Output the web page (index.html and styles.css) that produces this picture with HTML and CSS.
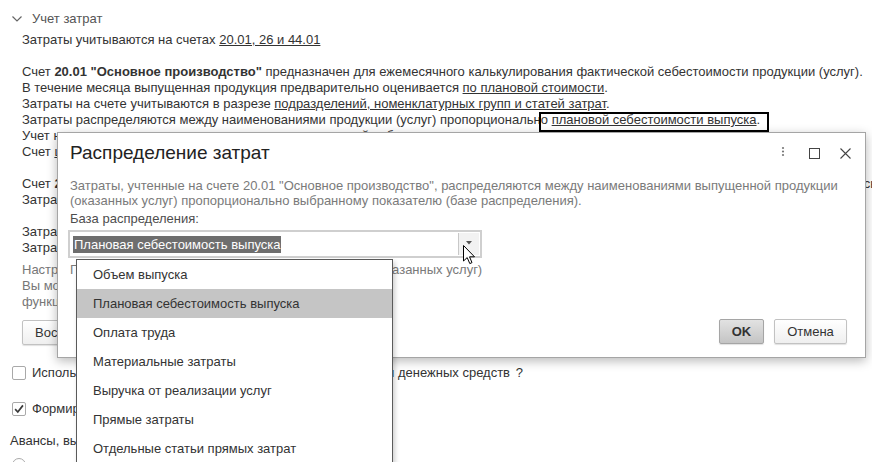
FILE: index.html
```html
<!DOCTYPE html>
<html lang="ru">
<head>
<meta charset="utf-8">
<title>Учет затрат</title>
<link rel="stylesheet" href="styles.css">
</head>
<body>
<div class="page">
  <div class="group-head">
    <svg class="chev" viewBox="0 0 10 6" width="10" height="6"><path d="M0.5 0.5 L5 5 L9.5 0.5" fill="none" stroke="#666" stroke-width="1.2"/></svg>
    <span>Учет затрат</span>
  </div>
  <div class="group-body">
    <p class="line">Затраты учитываются на счетах <a class="link">20.01, 26 и 44.01</a></p>
    <div class="para">
      <p class="line">Счет <b>20.01 "Основное производство"</b> предназначен для ежемесячного калькулирования фактической себестоимости продукции (услуг).</p>
      <p class="line">В течение месяца выпущенная продукция предварительно оценивается <a class="link">по плановой стоимости</a>.</p>
      <p class="line">Затраты на счете учитываются в разрезе <a class="link">подразделений, номенклатурных групп и статей затрат</a>.</p>
      <p class="line">Затраты распределяются между наименованиями продукции (услуг) пропорционально <span class="focus"><a class="link">плановой себестоимости выпуска</a>.</span></p>
      <p class="line">Учет незавершенного производства ведется по плановой себестоимости выпуска продукции.</p>
      <p class="line">Счет <a class="link">цеховых расходов</a> закрывается ежемесячно на себестоимость выпущенной продукции.</p>
    </div>
    <div class="para">
      <p class="line">Счет <b>26 "Общехозяйственные расходы"</b> предназначен для учета управленческих расходов, которые ежемесячно распределяются и списываются</p>
      <p class="line">Затраты на счете учитываются в разрезе подразделений и статей затрат.</p>
    </div>
    <div class="para">
      <p class="line">Затраты списываются ежемесячно в дебет счета 90.08 "Управленческие расходы".</p>
      <p class="line">Затраты по счету 44.01 "Издержки обращения" списываются ежемесячно.</p>
    </div>
    <div class="note">
      <p class="line">Настройки учета затрат устанавливаются автоматически в соответствии с параметрами учетной политики.</p>
      <p class="line">Вы можете изменить настройки вручную, если требуется дополнительная</p>
      <p class="line">функциональность учета затрат.</p>
    </div>
    <button class="btn page-btn">Восстановить настройки по умолчанию</button>
  </div>
  <div class="opt-row">
    <span class="check"></span>
    <span class="line">Использовать отражение затрат в разрезе статей движения денежных средств <a class="help">?</a></span>
  </div>
  <div class="opt-row">
    <span class="check checked"><svg viewBox="0 0 14 14" width="14" height="14"><path d="M2.5 7.2 L5.6 10.5 L11.6 2.8" fill="none" stroke="#3a3a3a" stroke-width="2"/></svg></span>
    <span class="line">Формировать проводки по начислению амортизации</span>
  </div>
  <div class="adv">
    <p class="line">Авансы, выданные поставщикам, зачитываются:</p>
    <div class="radio-row"><span class="radio"></span><span>автоматически</span></div>
  </div>
</div>

<div class="dialog">
  <div class="dlg-head">
    <div class="dlg-title">Распределение затрат</div>
    <div class="dlg-tools">
      <svg class="tool" viewBox="0 0 4 16" width="4" height="16"><circle cx="2" cy="3" r="1.1" fill="#777"/><circle cx="2" cy="6.5" r="1.1" fill="#777"/><circle cx="2" cy="10" r="1.1" fill="#777"/></svg>
      <svg class="tool" viewBox="0 0 11 11" width="11" height="11"><rect x="0.5" y="0.5" width="10" height="10" fill="none" stroke="#444" stroke-width="1"/></svg>
      <svg class="tool" viewBox="0 0 11 11" width="11" height="11"><path d="M0.5 0.5 L10.5 10.5 M10.5 0.5 L0.5 10.5" fill="none" stroke="#444" stroke-width="1.1"/></svg>
    </div>
  </div>
  <div class="dlg-body">
    <p class="desc">Затраты, учтенные на счете 20.01 "Основное производство", распределяются между наименованиями выпущенной продукции<br>(оказанных услуг) пропорционально выбранному показателю (базе распределения).</p>
    <div class="label">База распределения:</div>
    <div class="combo">
      <span class="sel">Плановая себестоимость выпуска</span>
      <span class="combo-btn"><svg viewBox="0 0 6 4" width="6" height="4"><path d="M0 0 H6 L3 3.5 Z" fill="#555"/></svg></span>
      <ul class="droplist">
        <li>Объем выпуска</li>
        <li class="active">Плановая себестоимость выпуска</li>
        <li>Оплата труда</li>
        <li>Материальные затраты</li>
        <li>Выручка от реализации услуг</li>
        <li>Прямые затраты</li>
        <li>Отдельные статьи прямых затрат</li>
      </ul>
      <svg class="cursor" viewBox="0 0 13 20" width="13" height="20"><path d="M0.5 0.5 V16 L4.2 12.6 L6.8 18.6 L9 17.6 L6.5 11.8 H11.5 Z" fill="#fff" stroke="#000" stroke-width="1" stroke-linejoin="round"/></svg>
    </div>
    <p class="hint">Показатель для распределения затрат продукции (оказанных услуг)</p>
  </div>
  <div class="dlg-foot">
    <button class="btn ok">OK</button>
    <button class="btn">Отмена</button>
  </div>
</div>
</body>
</html>
```

FILE: styles.css
```css
* { box-sizing: border-box; }
html, body { margin: 0; padding: 0; }
body {
  width: 872px;
  height: 462px;
  overflow: hidden;
  position: relative;
  background: #fff;
  font-family: Arial, "Liberation Sans", sans-serif;
  font-size: 13px;
  line-height: 16px;
  color: #333;
}
p { margin: 0; }
.line { white-space: nowrap; }
.link { color: inherit; text-decoration: underline; }

.page { padding-top: 11px; }
.group-head {
  display: flex;
  align-items: center;
  height: 16px;
  padding-left: 12px;
  color: #555;
}
.chev { margin-right: 10px; }
.group-body { padding-left: 22px; margin-top: 5px; }
.para { margin-top: 16px; }
.focus { position: relative; }
.focus::after {
  content: "";
  position: absolute;
  left: -13px;
  right: -9px;
  top: 0;
  bottom: -5px;
  border: 2px solid #000;
}
.note { margin-top: 6px; color: #777; }

.btn {
  font-family: Arial, "Liberation Sans", sans-serif;
  font-size: 13px;
  color: #333;
  height: 25px;
  padding: 0 12px;
  border: 1px solid #c2c2c2;
  border-radius: 2px;
  background: linear-gradient(#ffffff, #efefef);
  box-shadow: 0 1px 1px rgba(0,0,0,0.12);
}
.page-btn { margin-top: 10px; display: block; }

.opt-row {
  display: flex;
  align-items: center;
  gap: 6px;
  height: 16px;
  padding-left: 12px;
  margin-top: 20px;
}
.check {
  width: 14px;
  height: 14px;
  border: 1px solid #a9a9a9;
  border-radius: 2px;
  background: #fff;
  display: flex;
  align-items: center;
  justify-content: center;
}
.check svg { display: block; }
.help { margin-left: 2px; }
.adv { padding-left: 10px; margin-top: 16px; }
.radio-row { display: flex; align-items: center; gap: 6px; margin-top: 8px; padding-left: 2px; }
.radio {
  width: 14px;
  height: 14px;
  border: 1px solid #a9a9a9;
  border-radius: 50%;
}

/* Dialog */
.dialog {
  position: absolute;
  left: 57px;
  top: 132px;
  width: 809px;
  height: 226px;
  background: #fff;
  border: 1px solid #a5a5a5;
  box-shadow: 0 3px 10px rgba(0,0,0,0.28);
  display: flex;
  flex-direction: column;
}
.dlg-head {
  display: flex;
  align-items: center;
  justify-content: space-between;
  height: 40px;
  padding: 0 14px 0 12px;
}
.dlg-title { font-size: 19px; line-height: 24px; color: #222; }
.dlg-tools { display: flex; align-items: center; }
.dlg-tools .tool { display: block; margin-left: 20px; }
.dlg-tools .tool:first-child { margin-left: 0; margin-right: 4px; }

.dlg-body { padding: 5px 0 0 12px; position: relative; flex: 1; }
.desc { color: #7a7a7a; line-height: 15px; }
.label { margin-top: 3px; color: #4d4d4d; }
.combo {
  position: relative;
  margin-top: 3px;
  margin-left: -2px;
  width: 414px;
  height: 28px;
  border: 2px solid #cfcfcf;
  display: flex;
  align-items: center;
  padding-left: 3px;
}
.sel {
  background: #6e6e6e;
  color: #fff;
  line-height: 17px;
  padding: 0 1px;
}
.combo-btn {
  position: absolute;
  right: 1px;
  top: 1px;
  bottom: 1px;
  width: 21px;
  background: #f2f2f2;
  border-left: 1px solid #c8c8c8;
  display: flex;
  align-items: center;
  justify-content: center;
}
.combo-btn svg { display: block; margin-top: -3px; }
.droplist {
  position: absolute;
  left: 6px;
  top: 27px;
  width: 317px;
  height: 220px;
  margin: 0;
  padding: 0;
  list-style: none;
  background: #fff;
  border: 1px solid #5a5a5a;
  box-shadow: 2px 3px 5px rgba(0,0,0,0.2);
  z-index: 5;
}
.droplist li {
  height: 29px;
  line-height: 29px;
  padding-left: 16px;
  color: #333;
  white-space: nowrap;
}
.droplist li.active { background: #c5c5c5; }
.cursor {
  position: absolute;
  left: 393px;
  top: 13px;
  z-index: 6;
}
.hint { color: #7a7a7a; margin-top: 4px; white-space: nowrap; }

.dlg-foot {
  display: flex;
  justify-content: flex-end;
  gap: 10px;
  padding: 0 18px 13px 0;
}
.btn.ok {
  width: 45px;
  padding: 0;
  font-weight: bold;
  background: linear-gradient(#e2e2e2, #c4c4c4);
  border-color: #a5a5a5;
}
.dlg-foot .btn:last-child { width: 73px; padding: 0; }
```
